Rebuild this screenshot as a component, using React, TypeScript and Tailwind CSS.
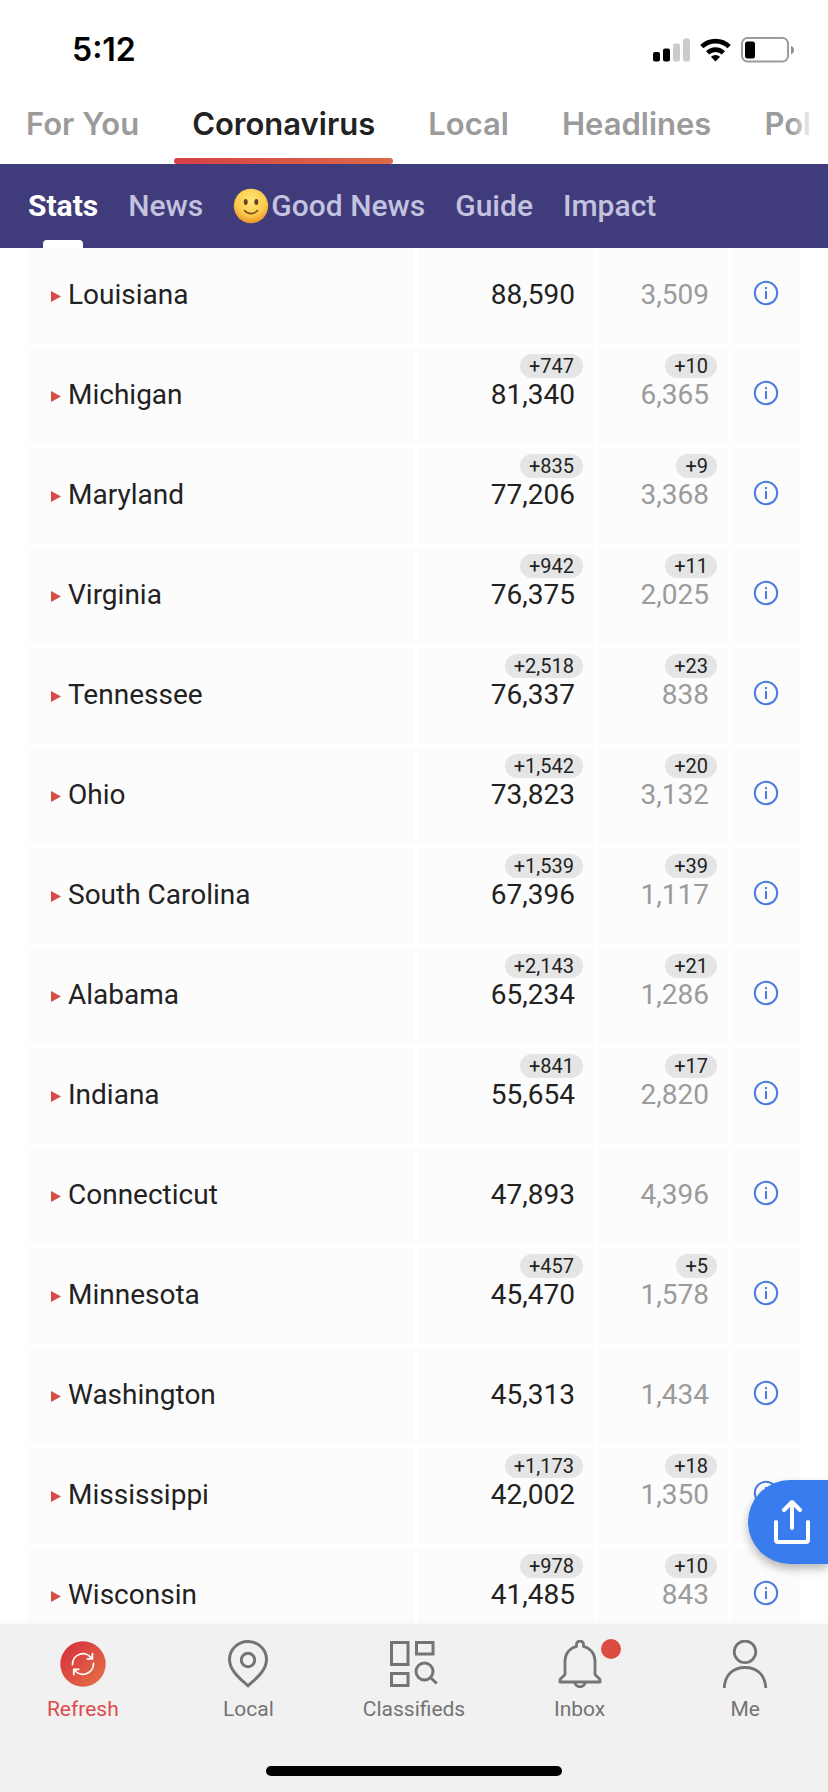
import { useState } from "react";
import clsx from "clsx";

const topTabs = ["For You", "Coronavirus", "Local", "Headlines", "Politics"];
const subTabs = ["Stats", "News", "Good News", "Guide", "Impact"];

const states = [
  { name: "Louisiana", cases: "88,590", deaths: "3,509" },
  { name: "Michigan", cases: "81,340", newCases: "+747", deaths: "6,365", newDeaths: "+10" },
  { name: "Maryland", cases: "77,206", newCases: "+835", deaths: "3,368", newDeaths: "+9" },
  { name: "Virginia", cases: "76,375", newCases: "+942", deaths: "2,025", newDeaths: "+11" },
  { name: "Tennessee", cases: "76,337", newCases: "+2,518", deaths: "838", newDeaths: "+23" },
  { name: "Ohio", cases: "73,823", newCases: "+1,542", deaths: "3,132", newDeaths: "+20" },
  { name: "South Carolina", cases: "67,396", newCases: "+1,539", deaths: "1,117", newDeaths: "+39" },
  { name: "Alabama", cases: "65,234", newCases: "+2,143", deaths: "1,286", newDeaths: "+21" },
  { name: "Indiana", cases: "55,654", newCases: "+841", deaths: "2,820", newDeaths: "+17" },
  { name: "Connecticut", cases: "47,893", deaths: "4,396" },
  { name: "Minnesota", cases: "45,470", newCases: "+457", deaths: "1,578", newDeaths: "+5" },
  { name: "Washington", cases: "45,313", deaths: "1,434" },
  { name: "Mississippi", cases: "42,002", newCases: "+1,173", deaths: "1,350", newDeaths: "+18" },
  { name: "Wisconsin", cases: "41,485", newCases: "+978", deaths: "843", newDeaths: "+10" },
];

function StatusBar() {
  return (
    <div className="flex h-[100px] items-center justify-between pr-[34px] pl-[72px]">
      <span className="font-['Inter',sans-serif] text-[32px] leading-10 font-semibold text-black">5:12</span>
      <div className="flex items-center gap-[10px]">
        <svg width="37" height="24" viewBox="0 0 37 24">
          <rect x="0" y="14" width="7" height="9.5" rx="2" />
          <rect x="10" y="10.5" width="7" height="13" rx="2" />
          <rect x="20" y="5.5" width="7" height="18" rx="2" fill="#cbcbcb" />
          <rect x="30" y="0.5" width="7" height="23" rx="2" fill="#cbcbcb" />
        </svg>
        <svg width="31" height="24" viewBox="0 0 31 24" fill="none" stroke="#000" strokeWidth="4.6">
          <path d="M1.8 8.6a19.8 19.8 0 0 1 27.4 0" />
          <path d="M7.6 14.8a11.4 11.4 0 0 1 15.8 0" />
          <path d="M15.5 23.5l-4.6-4.7a6.6 6.6 0 0 1 9.2 0z" fill="#000" stroke="none" />
        </svg>
        <svg width="53" height="26" viewBox="0 0 53 26">
          <rect x="1" y="1" width="46" height="23.5" rx="5.5" fill="none" stroke="#9b9b9b" strokeWidth="2" />
          <rect x="4" y="4.5" width="10" height="17" rx="2.5" />
          <path d="M50 9c2 .6 3 2 3 4s-1 3.4-3 4z" fill="#8e8e8e" />
        </svg>
      </div>
    </div>
  );
}

function SmileIcon() {
  return (
    <svg width="36" height="36" viewBox="0 0 36 36">
      <defs>
        <radialGradient id="smile" cx="0.5" cy="0.35" r="0.65">
          <stop offset="0" stopColor="#ffe67a" />
          <stop offset="0.65" stopColor="#fccb4b" />
          <stop offset="1" stopColor="#e8932b" />
        </radialGradient>
      </defs>
      <circle cx="18" cy="18" r="17.2" fill="url(#smile)" />
      <ellipse cx="12.7" cy="14" rx="2" ry="3" fill="#6a431c" />
      <ellipse cx="23.3" cy="14" rx="2" ry="3" fill="#6a431c" />
      <path d="M11.5 22.5c3.5 4.2 9.5 4.2 13 0" fill="none" stroke="#7a4c1c" strokeWidth="1.6" strokeLinecap="round" />
    </svg>
  );
}

function InfoIcon() {
  return (
    <svg width="26" height="26" viewBox="0 0 26 26" fill="none" stroke="#4a7be0" strokeWidth="2">
      <circle cx="13" cy="13" r="11.2" />
      <path d="M13 11v8M13 7v2.2" />
    </svg>
  );
}

function RefreshIcon() {
  return (
    <svg width="48" height="48" viewBox="0 0 48 48" fill="none">
      <defs>
        <linearGradient id="refresh" x1="0.1" y1="0.1" x2="0.9" y2="0.9">
          <stop offset="0" stopColor="#d6333e" />
          <stop offset="1" stopColor="#e46d46" />
        </linearGradient>
      </defs>
      <circle cx="24" cy="24" r="22.7" fill="url(#refresh)" />
      <g stroke="#fff" strokeWidth="1.8" strokeLinecap="round" strokeLinejoin="round">
        <path d="M13.5 24.5a10.4 10.4 0 0 1 19-6.2M33.4 13.7v5.2h-5" />
        <path d="M34.5 23.5a10.4 10.4 0 0 1-19 6.2M14.8 34.5v-5.2h5" />
      </g>
    </svg>
  );
}

function PinIcon() {
  return (
    <svg width="48" height="48" viewBox="0 0 48 48" fill="none" stroke="#747474" strokeWidth="3">
      <path d="M24 46C20 41.5 5.5 32 5.5 19.5a18.5 18 0 0 1 37 0C42.5 32 28 41.5 24 46z" strokeLinejoin="round" />
      <circle cx="24" cy="20" r="6.7" />
    </svg>
  );
}

function ClassifiedsIcon() {
  return (
    <svg width="48" height="48" viewBox="0 0 48 48" fill="none" stroke="#747474" strokeWidth="3">
      <rect x="1.5" y="2.5" width="16.5" height="22" />
      <rect x="1.5" y="33.5" width="16.5" height="12" />
      <rect x="26.5" y="2.5" width="16.5" height="11.5" />
      <circle cx="34.5" cy="31.5" r="8.5" />
      <path d="M40.5 37.5l6.2 6" />
    </svg>
  );
}

function BellIcon() {
  return (
    <svg width="48" height="48" viewBox="0 0 48 48" fill="none" stroke="#747474" strokeWidth="2.8" strokeLinejoin="round">
      <path d="M20.5 6.5v-2a3.5 3.5 0 0 1 7 0v2C34.5 8 39 14 39 21v13.5l5 5V42H4v-2.5l5-5V21c0-7 4.5-13 11.5-14.5z" />
      <path d="M18.5 42c.8 3 2.7 4.7 5.5 4.7s4.7-1.7 5.5-4.7" />
    </svg>
  );
}

function PersonIcon() {
  return (
    <svg width="48" height="48" viewBox="0 0 48 48" fill="none" stroke="#747474" strokeWidth="2.8">
      <circle cx="24" cy="11.8" r="10.8" />
      <path d="M3.2 48C4 34.5 12 27.5 24 27.5S44 34.5 44.8 48" />
    </svg>
  );
}

const navItems = [
  { icon: RefreshIcon, label: "Refresh", active: true },
  { icon: PinIcon, label: "Local" },
  { icon: ClassifiedsIcon, label: "Classifieds" },
  { icon: BellIcon, label: "Inbox", unread: true },
  { icon: PersonIcon, label: "Me" },
];

function CountCell({ value, change, className }: { value: string; change?: string; className: string }) {
  return (
    <td className="h-[100px] border-r-4 border-b-4 border-white bg-[#fcfcfc] pt-[6px] pr-[11px] align-top">
      <div className="flex flex-col items-end">
        <div className="h-6">
          {change && (
            <span className="block rounded-full bg-[#e5e5e5] px-[9px] text-[20px] leading-6 text-[#222]">
              {change}
            </span>
          )}
        </div>
        <span className={clsx("pr-2 text-[28px] leading-[34px]", className)}>{value}</span>
      </div>
    </td>
  );
}

export default function App() {
  const [topTab, setTopTab] = useState("Coronavirus");
  const [subTab, setSubTab] = useState("Stats");

  return (
    <div className="flex h-screen flex-col overflow-hidden bg-white font-['Roboto',sans-serif]">
      <header>
        <StatusBar />
        <nav className="relative flex gap-[17px] overflow-hidden pl-2 whitespace-nowrap">
          {topTabs.map((tab) => (
            <button key={tab} onClick={() => setTopTab(tab)} className="shrink-0">
              <span
                className={clsx(
                  "block px-[18px] font-['Inter',sans-serif] text-[31px] leading-12 font-semibold",
                  tab === topTab ? "text-[#222]" : "text-[#9b9b9b]",
                )}
              >
                {tab}
              </span>
              <span
                className={clsx(
                  "mt-[10px] block h-[6px] rounded-full",
                  tab === topTab && "bg-linear-to-r from-[#d63f45] to-[#dc6a4a]",
                )}
              />
            </button>
          ))}
          <div className="pointer-events-none absolute inset-y-0 right-0 w-9 bg-linear-to-r from-white/0 to-white to-60%" />
        </nav>
        <nav className="flex gap-[30px] bg-[#403b7a] pl-7">
          {subTabs.map((tab) => (
            <button key={tab} onClick={() => setSubTab(tab)} className="flex flex-col items-center pt-5">
              <span
                className={clsx(
                  "flex items-center gap-[2px] text-[30px] leading-11",
                  tab === subTab ? "font-bold text-white" : "font-medium text-[#c4c2df]",
                )}
              >
                {tab === "Good News" && <SmileIcon />}
                {tab}
              </span>
              <span className={clsx("mt-3 h-2 w-10 rounded-t", tab === subTab && "bg-white")} />
            </button>
          ))}
        </nav>
      </header>

      <div className="relative min-h-0 flex-1">
        <main className="h-full overflow-hidden px-7">
          <table className="w-full table-fixed border-separate border-spacing-0">
            <colgroup>
              <col />
              <col className="w-[180px]" />
              <col className="w-[134px]" />
              <col className="w-[68px]" />
            </colgroup>
            <tbody>
              {states.map((state) => (
                <tr key={state.name}>
                  <th
                    scope="row"
                    className="border-r-4 border-b-4 border-white bg-[#fcfcfc] pt-[30px] pl-[23px] text-left align-top font-normal"
                  >
                    <button className="flex items-center gap-[7px] text-[28px] leading-[34px] text-[#222]">
                      <svg width="10" height="11" viewBox="0 0 10 11" className="mt-[2px] fill-[#d64b43]">
                        <path d="M0 0l10 5.5L0 11z" />
                      </svg>
                      {state.name}
                    </button>
                  </th>
                  <CountCell value={state.cases} change={state.newCases} className="text-[#222]" />
                  <CountCell value={state.deaths} change={state.newDeaths} className="text-[#9b9b9b]" />
                  <td className="border-b-4 border-white bg-[#fcfcfc] pt-8 align-top">
                    <button aria-label={`About ${state.name}`} className="mx-auto block">
                      <InfoIcon />
                    </button>
                  </td>
                </tr>
              ))}
            </tbody>
          </table>
        </main>
        <button
          aria-label="Share"
          className="absolute right-0 bottom-[60px] flex h-[84px] w-20 items-center justify-center rounded-l-full bg-[#387cee] pl-2 shadow-[0_5px_10px_rgba(0,0,0,0.28)]"
        >
          <svg
            width="40"
            height="48"
            viewBox="0 0 40 48"
            fill="none"
            stroke="#fff"
            strokeWidth="4"
            strokeLinecap="round"
            strokeLinejoin="round"
          >
            <path d="M20 30V4.5M12 12l8-8 8 8" />
            <path d="M4 24v18a2 2 0 0 0 2 2h28a2 2 0 0 0 2-2V24" />
          </svg>
        </button>
      </div>

      <footer className="relative bg-[#f1f1f1] pt-4 shadow-[0_0_6px_#f1f1f1]">
        <nav className="flex">
          {navItems.map((item) => (
            <a key={item.label} href="#" className="flex flex-1 basis-0 flex-col items-center">
              <span className="relative">
                <item.icon />
                {item.unread && (
                  <span className="absolute -top-px left-[45px] size-5 rounded-full bg-[#dc4c40]" />
                )}
              </span>
              <span
                className={clsx("mt-2 text-[21px] leading-[26px]", item.active ? "text-[#dc4c4c]" : "text-[#747474]")}
              >
                {item.label}
              </span>
            </a>
          ))}
        </nav>
        <div className="mx-auto mt-11 mb-4 h-[10px] w-[296px] rounded-full bg-black" />
      </footer>
    </div>
  );
}
